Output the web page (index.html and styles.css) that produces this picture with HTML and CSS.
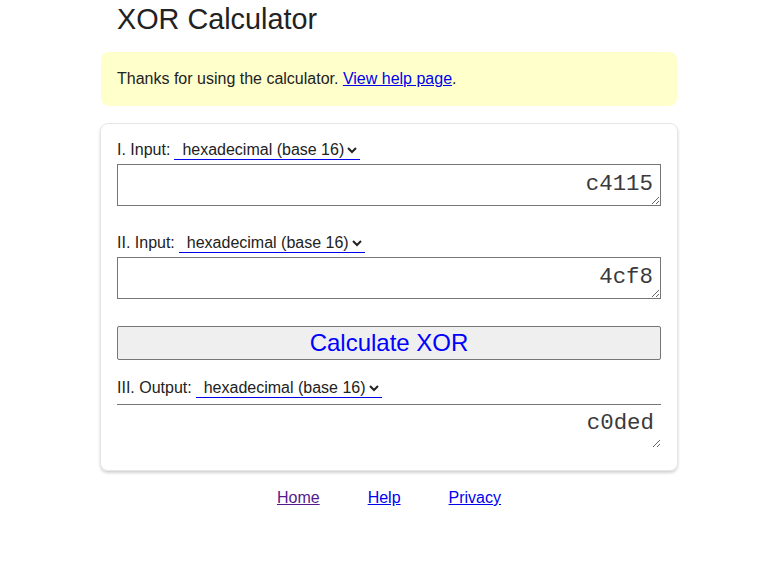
FILE: index.html
```html
<!DOCTYPE html>
<html lang="en">
<head>
<meta charset="utf-8">
<title>XOR Calculator</title>
<link rel="stylesheet" href="styles.css">
</head>
<body>
<div class="page">
  <h1 class="title">XOR Calculator</h1>
  <div class="notice">Thanks for using the calculator. <a href="#help">View help page</a>.</div>
  <form class="card">
    <div class="field">
      <div class="label-row">
        <label class="label">I. Input:</label>
        <select class="base-select"><option>hexadecimal (base 16)</option></select>
      </div>
      <textarea class="num-box">c4115</textarea>
    </div>
    <div class="field">
      <div class="label-row">
        <label class="label">II. Input:</label>
        <select class="base-select"><option>hexadecimal (base 16)</option></select>
      </div>
      <textarea class="num-box">4cf8</textarea>
    </div>
    <button type="button" class="calc-btn">Calculate XOR</button>
    <div class="field output">
      <div class="label-row">
        <label class="label">III. Output:</label>
        <select class="base-select"><option>hexadecimal (base 16)</option></select>
      </div>
      <textarea class="num-box out-box" readonly>c0ded</textarea>
    </div>
  </form>
  <nav class="footer">
    <a href="#home" class="visited">Home</a>
    <a href="#help">Help</a>
    <a href="#privacy">Privacy</a>
  </nav>
</div>
</body>
</html>
```

FILE: styles.css
```css
html, body {
  margin: 0;
  padding: 0;
  background: #fff;
}
body {
  font-family: Arial, "Liberation Sans", sans-serif;
  font-size: 16px;
  color: #222;
}
.page {
  width: 578px;
  margin: 0 0 0 calc(50% - 290px);
}
.title {
  font-size: 28.8px;
  font-weight: normal;
  margin: 0;
  padding: 3px 0 0 17px;
  line-height: 33px;
  height: 49px;
}
.notice {
  margin: 0 1px;
  background: #ffffcc;
  border-radius: 8px;
  padding: 17px 16px 17px 16px;
  line-height: 20px;
}
.notice a {
  color: #0000ee;
}
.card {
  margin-top: 17px;
  border: 1px solid #e6e6e6;
  border-radius: 8px;
  box-shadow: 0 2px 3px rgba(0,0,0,0.18);
  padding: 16px 16px 22px 16px;
  display: flex;
  flex-direction: column;
}
.field {
  display: flex;
  flex-direction: column;
  gap: 4px;
  margin-bottom: 27px;
}
.label-row {
  display: flex;
  align-items: center;
  gap: 4px;
  height: 20px;
}
.label {
  color: #222;
}
.base-select {
  font-family: Arial, "Liberation Sans", sans-serif;
  font-size: 16px;
  color: #222;
  border: 0;
  border-bottom: 1px solid #0000ee;
  border-radius: 0;
  background: #fff;
  padding: 0 0 0 4px;
  height: 20px;
}
.num-box {
  box-sizing: border-box;
  height: 42px;
  width: 100%;
  font-family: "Courier New", "Liberation Mono", monospace;
  font-size: 22.4px;
  color: #3a3a3a;
  text-align: right;
  border: 1px solid #767676;
  border-radius: 0;
  padding: 6px 7px;
  line-height: 26px;
  resize: vertical;
  overflow: hidden;
  margin: 0;
}
.calc-btn {
  height: 34px;
  font-family: Arial, "Liberation Sans", sans-serif;
  font-size: 24px;
  color: #0000ff;
  background: #efefef;
  border: 1px solid #767676;
  border-radius: 2px;
  margin-bottom: 18px;
  padding: 0;
}
.output {
  margin-bottom: 0;
  gap: 6px;
}
.out-box {
  border: 0;
  border-top: 1px solid #767676;
  height: 44px;
  padding: 5px 7px 0 7px;
}
.footer {
  display: flex;
  justify-content: center;
  gap: 48px;
  margin-top: 17px;
  line-height: 20px;
}
.footer a {
  color: #0000ee;
}
.footer a.visited {
  color: #551a8b;
}
```
